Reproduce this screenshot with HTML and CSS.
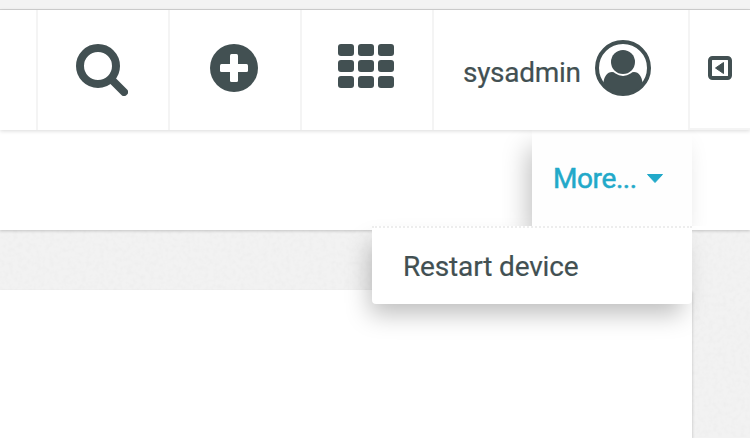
FILE: index.html
```
<!DOCTYPE html>
<html lang="en">
<head>
<meta charset="utf-8">
<title>Device administration</title>
<link rel="stylesheet" href="styles.css">
</head>
<body>
<div class="app">
  <div class="chrome"></div>
  <header class="topbar">
    <div class="cell cell-first"></div>
    <div class="cell">
      <svg class="icon-search" width="52" height="52" viewBox="0 0 52 52"><circle cx="22" cy="22" r="18" fill="none" stroke="currentColor" stroke-width="8"/><path d="M35.500 35.500 48 48" stroke="currentColor" stroke-width="8" stroke-linecap="round"/></svg>
    </div>
    <div class="cell">
      <svg class="icon-add" width="48" height="48" viewBox="0 0 48 48"><circle cx="24" cy="24" r="24" fill="currentColor"/><rect x="20" y="10" width="8" height="28" rx="1.500" fill="#fff"/><rect x="10" y="20" width="28" height="8" rx="1.500" fill="#fff"/></svg>
    </div>
    <div class="cell">
      <div class="icon-grid"><i></i><i></i><i></i><i></i><i></i><i></i><i></i><i></i><i></i></div>
    </div>
    <div class="cell cell-user">
      <span class="username">sysadmin</span>
      <svg class="avatar" width="56" height="56" viewBox="0 0 56 56"><circle cx="28" cy="28" r="26" fill="none" stroke="currentColor" stroke-width="4"/><circle cx="28" cy="22" r="12" fill="currentColor"/><path d="M8.500 42C9.500 36.500 12 32 17 32Q19 32 20 33.300Q28 38.500 36 33.300Q37 32 39 32C44 32 46.500 36.500 47.500 42L46 46A26 26 0 0 1 10 46Z" fill="currentColor"/></svg>
    </div>
    <div class="cell cell-toggle">
      <svg width="24" height="24" viewBox="0 0 24 24"><rect x="2" y="2" width="20" height="20" rx="2.500" fill="none" stroke="currentColor" stroke-width="4"/><path d="M15.500 6.500v11L7.500 12Z" fill="currentColor" stroke="currentColor" stroke-linejoin="round"/></svg>
    </div>
  </header>
  <div class="actionbar"></div>
  <main class="canvas">
    <svg class="texture" width="750" height="207"><filter id="grain" x="0" y="0" width="100%" height="100%"><feTurbulence type="fractalNoise" baseFrequency="0.22" numOctaves="2" seed="4"/><feColorMatrix values="0 0 0 0 0.5  0 0 0 0 0.5  0 0 0 0 0.5  0.150 0 0 0 -0.060"/></filter><rect width="750" height="207" filter="url(#grain)"/></svg>
    <section class="panel"></section>
  </main>
  <div class="dropdown">
    <div class="more-wrap"><div class="more"><span>More...</span><svg width="18" height="10" viewBox="0 0 18 10"><path d="M1.500 .5h15L9 8.500Z" fill="currentColor" stroke="currentColor" stroke-linejoin="round"/></svg></div></div>
    <div class="menu"><span>Restart device</span></div>
  </div>
</div>
</body>
</html>
```
FILE: styles.css
```
* { box-sizing: border-box; }
body { margin: 0; background: #fff; font-family: Roboto, "Liberation Sans", sans-serif; color: #425052; }
.app { position: relative; width: 750px; height: 438px; overflow: hidden; }
svg { display: block; flex: none; }
.chrome { height: 10px; background: #f3f3f3; border-bottom: 1px solid #d2d2d2; }
.topbar { position: relative; z-index: 3; display: flex; height: 120px; background: #fff; box-shadow: 0 1px 4px rgba(0,0,0,.15); }
.cell { width: 132px; display: flex; justify-content: center; padding-top: 34px; border-right: 2px solid #f4f4f4; }
.cell-first { width: 38px; }
.icon-search { margin-left: -2px; }
.icon-add { margin-left: -2px; }
.icon-grid { display: grid; grid-template-columns: repeat(3, 16px); grid-auto-rows: 12px; gap: 4px; height: 44px; margin-left: -2px; }
.icon-grid i { background: #425052; border-radius: 3px; }
.cell-user { width: 256px; justify-content: flex-start; padding: 30px 0 0 29px; gap: 15px; }
.username { width: 117px; font-size: 28px; line-height: 66px; white-space: nowrap; letter-spacing: -.3px; -webkit-text-stroke: .2px; }
.cell-toggle { width: 60px; height: 120px; justify-content: flex-start; padding: 46px 0 0 18px; border-right: 0; border-bottom: 2px solid #f4f4f4; }
.actionbar { position: relative; z-index: 1; height: 100px; background: #fff; box-shadow: 0 1px 3px rgba(0,0,0,.2); }
.canvas { position: relative; height: 208px; padding-top: 60px; background: #f2f2f2; }
.texture { position: absolute; top: 0; left: 0; }
.panel { position: relative; width: 692px; height: 148px; background: #fff; box-shadow: 0 2px 3px rgba(0,0,0,.22); }
.dropdown { position: absolute; z-index: 2; top: 130px; left: 372px; width: 320px; }
.more-wrap { height: 96px; padding-left: 160px; }
.more { display: flex; align-items: flex-start; width: 160px; height: 96px; padding: 31px 0 0 21px; background: #fefefe; color: #22a9c9; box-shadow: -8px 14px 24px -4px rgba(0,0,0,.25); clip-path: inset(0 -30px 0 -30px); }
.more span { width: 93px; font-size: 28px; line-height: 36px; letter-spacing: -.4px; -webkit-text-stroke: .5px; }
.more svg { margin-top: 13px; }
.menu { height: 78px; padding: 21px 0 0 31px; background: #fff; border-top: 2px dotted #ededed; border-radius: 0 0 4px 4px; box-shadow: -6px 14px 24px -4px rgba(0,0,0,.26); font-size: 28px; line-height: 36px; white-space: nowrap; letter-spacing: -.15px; -webkit-text-stroke: .2px; }
```
